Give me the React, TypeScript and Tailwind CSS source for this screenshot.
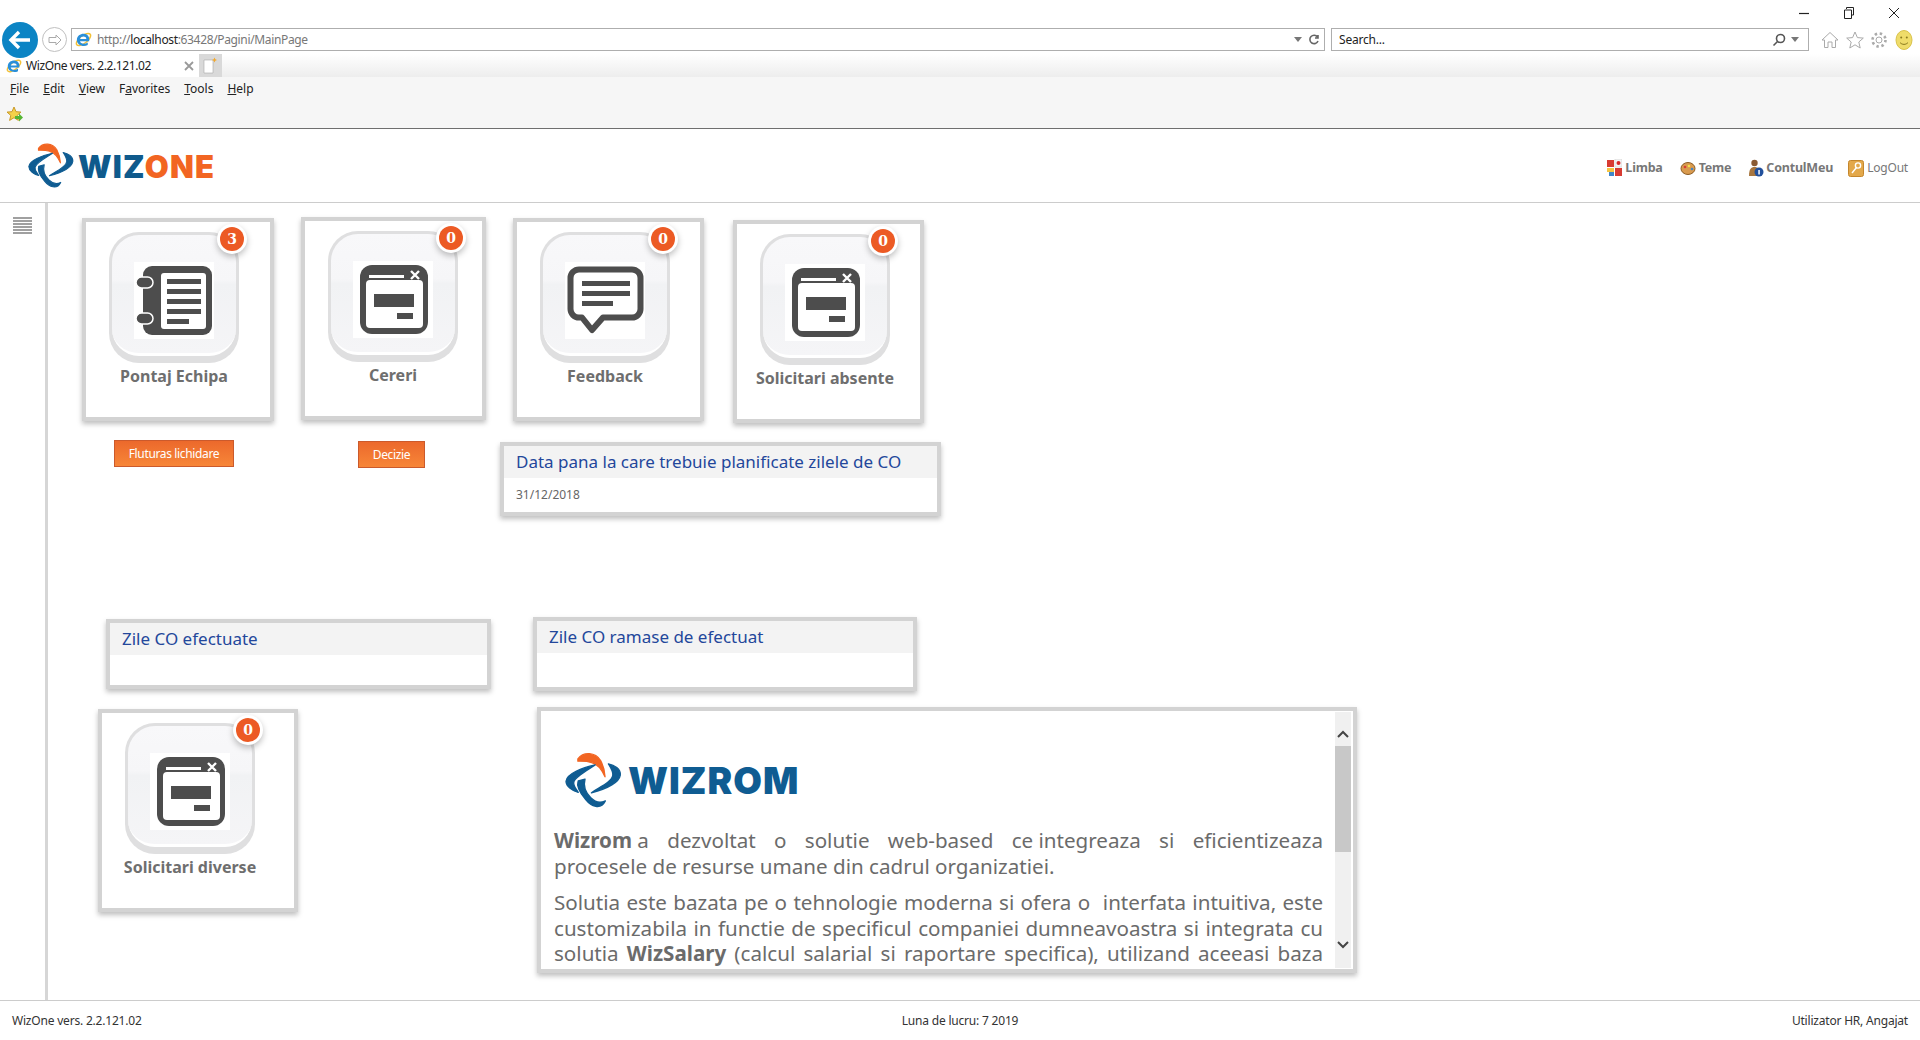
import React from 'react';

const pageFont = { fontFamily: '"Noto Sans", sans-serif' };

const LogoMark: React.FC<{ size: number; className?: string }> = ({ size, className }) => (
  <svg width={size} height={size} viewBox="-3 -3 171 171" strokeWidth="4" strokeLinejoin="round" className={className}>
    <path d="M35 20C52-2 86 0 102 25C110 40 114 56 115 73C106 52 95 36 76 31C60 26 46 27 35 27Z" fill="#f26522" stroke="#f26522" />
    <path d="M125 35C142 38 162 50 160 68C157 88 125 108 75 120C100 103 136 88 138 68C139 56 131 45 125 35Z" fill="#0f5c92" stroke="#0f5c92" />
    <path d="M36 85C30 102 42 122 58 140C74 160 102 172 116 144C100 152 86 148 73 135C58 120 50 102 56 80Z" fill="#0f5c92" stroke="#0f5c92" />
    <path d="M86 38C48 46 2 64 0 86C0 102 20 115 36 119C30 108 20 100 23 88C27 72 62 54 86 38Z" fill="#0f5c92" stroke="#0f5c92" />
  </svg>
);

const IeIcon: React.FC<{ size?: number }> = ({ size = 18 }) => (
  <svg width={size} height={size} viewBox="0 0 18 18" fill="none">
    <ellipse cx="9" cy="9" rx="9" ry="4" transform="rotate(-38 9 9)" stroke="#f2c037" strokeWidth="1.6" />
    <path d="M15 10.8H5.3C5.6 13.4 10 14.5 13.5 12.2V14.8C8.8 17.2 2 15 2 9.4C2 3.6 9 1.4 12.8 4C14.8 5.5 15.4 8 15 10.8ZM12 8.4C12 5 5.8 5 5.4 8.4Z" fill="#2a8fd8" />
  </svg>
);

const NotebookIcon = () => (
  <svg width="80" height="77" viewBox="0 0 80 77">
    <rect x="9" y="4" width="69" height="69" rx="9" fill="#4d4d4d" />
    <rect x="27" y="11" width="45" height="56" rx="3" fill="#fff" />
    <rect x="33" y="17" width="34" height="5" fill="#4d4d4d" />
    <rect x="33" y="27" width="34" height="5" fill="#4d4d4d" />
    <rect x="33" y="37" width="34" height="5" fill="#4d4d4d" />
    <rect x="33" y="47" width="34" height="5" fill="#4d4d4d" />
    <rect x="33" y="57" width="22" height="5" fill="#4d4d4d" />
    <rect x="2" y="15" width="17" height="11" rx="5.5" fill="#4d4d4d" stroke="#fff" strokeWidth="1.5" />
    <rect x="2" y="51" width="17" height="11" rx="5.5" fill="#4d4d4d" stroke="#fff" strokeWidth="1.5" />
  </svg>
);

const WindowIcon = () => (
  <svg width="80" height="77" viewBox="0 0 80 77">
    <rect x="7" y="4" width="68" height="69" rx="12" fill="#4d4d4d" />
    <rect x="13" y="19" width="57" height="48" rx="4" fill="#fff" />
    <rect x="16" y="14" width="35" height="3" fill="#fff" />
    <path d="M58 10L66 18M66 10L58 18" stroke="#fff" strokeWidth="2.4" />
    <rect x="21" y="33" width="40" height="13" fill="#4d4d4d" />
    <rect x="44" y="52" width="16" height="6" fill="#4d4d4d" />
  </svg>
);

const ChatIcon = () => (
  <svg width="80" height="77" viewBox="0 0 80 77" fill="none">
    <path
      d="M14 7.5H67A8.5 8.5 0 0 1 75.5 16V47A8.5 8.5 0 0 1 67 55.5H38L27 68L17 55.5H14A8.5 8.5 0 0 1 5.5 47V16A8.5 8.5 0 0 1 14 7.5Z"
      stroke="#4d4d4d"
      strokeWidth="6"
      strokeLinejoin="round"
    />
    <rect x="17" y="19" width="48" height="5" fill="#4d4d4d" />
    <rect x="17" y="29" width="48" height="5" fill="#4d4d4d" />
    <rect x="17" y="39" width="31" height="5" fill="#4d4d4d" />
  </svg>
);

const Badge: React.FC<{ count: number }> = ({ count }) => (
  <div className="absolute -right-[8px] -top-[8px] flex h-[30px] w-[30px] items-center justify-center rounded-full bg-white shadow-[0_3px_6px_rgba(0,0,0,0.25)]">
    <div
      className="flex h-[24px] w-[24px] items-center justify-center rounded-full bg-[#ec5a24] text-[14px] font-bold text-white"
      style={{ fontFamily: '"DejaVu Serif", serif' }}
    >
      {count}
    </div>
  </div>
);

type TileCardProps = {
  title: string;
  count: number;
  icon: React.ReactNode;
  className: string;
};

const TileCard: React.FC<TileCardProps> = ({ title, count, icon, className }) => (
  <div className={`h-[203px] shrink-0 border-4 border-[#d3d3d3] bg-white pl-[23px] pt-[10px] shadow-[0_3px_5px_rgba(0,0,0,0.25)] ${className}`}>
    <div className="flex w-[130px] flex-col items-center">
      <div className="relative h-[131px] w-[130px] rounded-[30px] bg-[#dfdfe0] px-[3px] pb-[7px] pt-[3px]">
        <div className="flex h-full items-center justify-center rounded-[27px] border-b-[3px] border-white bg-[linear-gradient(#f8f8fa_0%,#f6f6f8_38%,#f1f2f4_42%,#f5f5f7_100%)] pt-[13px]">
          <div className="bg-white">{icon}</div>
        </div>
        <Badge count={count} />
      </div>
      <div className="mt-px whitespace-nowrap text-[16px] font-bold text-[#6e6e6e]" style={pageFont}>
        {title}
      </div>
    </div>
  </div>
);

const ActionButton: React.FC<{ label: string; className: string }> = ({ label, className }) => (
  <button
    className={`block h-[27px] border border-[#cb5a2c] bg-[linear-gradient(#ec692c,#f78638)] text-[12px] tracking-[-0.35px] text-white ${className}`}
    style={pageFont}
  >
    {label}
  </button>
);

const InfoPanel: React.FC<{ title: string; children?: React.ReactNode; className: string }> = ({ title, children, className }) => (
  <div className={`shrink-0 border-4 border-[#d3d3d3] bg-white shadow-[0_3px_5px_rgba(0,0,0,0.25)] ${className}`} style={pageFont}>
    <div className="flex h-[32px] items-center bg-[#f3f3f3] pl-[12px] text-[17px] text-[#23479b]">{title}</div>
    {children}
  </div>
);

const MiniIcon: React.FC<{ children: React.ReactNode }> = ({ children }) => (
  <svg width="16" height="18" viewBox="0 0 16 18" className="shrink-0">
    {children}
  </svg>
);

function MiniIconSlot({ className, children }: { className: string; children: React.ReactNode }) {
  return (
    <span className={`flex ${className}`}>
      <MiniIcon>{children}</MiniIcon>
    </span>
  );
}

const MENU = ['File', 'Edit', 'View', 'Favorites', 'Tools', 'Help'];

const BrowserChrome = () => (
  <div className="h-[129px] shrink-0 border-b border-[#6f6f6f] bg-white" style={pageFont}>
    {/* Window buttons */}
    <div className="flex h-[28px] items-center justify-end gap-[31px] pb-[3px] pr-[19px]">
      <svg width="14" height="14" viewBox="0 0 14 14"><path d="M2 7.5H12" stroke="#222" strokeWidth="1.2" /></svg>
      <svg width="14" height="14" viewBox="0 0 14 14" fill="none" stroke="#222"><path d="M4.5 3V1.5H11.5V9H9.5M2.5 4H9.5V12.5H2.5Z" /></svg>
      <svg width="14" height="14" viewBox="0 0 14 14" stroke="#222"><path d="M2 2L12 12M12 2L2 12" /></svg>
    </div>

    {/* Address row */}
    <div className="relative z-10 flex h-[23px] items-center pr-[10px]">
      <div className="ml-[2px] flex h-[36px] w-[36px] shrink-0 items-center justify-center rounded-full bg-[#0b84c4]">
        <svg width="24" height="22" viewBox="0 0 24 22" fill="none" stroke="#fff" strokeWidth="3.4"><path d="M11 3L3 11L11 19M3 11H22" /></svg>
      </div>
      <div className="ml-[4px] flex h-[25px] w-[25px] shrink-0 items-center justify-center rounded-full border border-[#c0c0c0]">
        <svg width="14" height="14" viewBox="0 0 14 14" fill="none" stroke="#aaa"><path d="M8 2L13 7L8 12V9.5H1V4.5H8Z" /></svg>
      </div>
      <div className="ml-[4px] flex h-[23px] w-[1254px] shrink-0 items-center border border-[#aeaeae] pl-[3px] text-[12px] tracking-[-0.35px] text-[#777]">
        <IeIcon size={17} />
        <span className="ml-[5px]">http://<span className="text-[#222]">localhost</span>:63428/Pagini/MainPage</span>
        <svg width="8" height="5" viewBox="0 0 8 5" className="ml-auto"><path d="M0 0H8L4 5Z" fill="#777" /></svg>
        <svg width="12" height="12" viewBox="0 0 12 12" fill="none" stroke="#666" strokeWidth="1.6" className="ml-[6px] mr-[4px]"><path d="M9.5 3A4.2 4.2 0 1 0 10 7M10 1V4H7" /></svg>
      </div>
      <div className="ml-[6px] flex h-[23px] w-[478px] shrink-0 items-center border border-[#aeaeae] pl-[7px] text-[12px] tracking-[-0.2px] text-[#222]">
        Search...
        <svg width="14" height="14" viewBox="0 0 14 14" fill="none" stroke="#555" strokeWidth="1.6" className="ml-auto"><circle cx="8.5" cy="5.5" r="4" /><path d="M5.5 8.5L1.5 12.5" /></svg>
        <svg width="8" height="5" viewBox="0 0 8 5" className="ml-[5px] mr-[9px]"><path d="M0 0H8L4 5Z" fill="#777" /></svg>
      </div>
      <div className="ml-[12px] flex items-center gap-[6.5px]">
        <svg width="18" height="18" viewBox="0 0 18 18" fill="none" stroke="#aaa"><path d="M1 9L9 1.5L17 9H14.5V16.5H11V11H7V16.5H3.5V9Z" /></svg>
        <svg width="18" height="18" viewBox="0 0 18 18" fill="none" stroke="#aaa"><path d="M9 1L11.4 6.6L17.3 7.1L12.8 11L14.2 17L9 13.8L3.8 17L5.2 11L.7 7.1L6.6 6.6Z" /></svg>
        <svg width="18" height="18" viewBox="0 0 18 18" fill="none" stroke="#aaa"><circle cx="9" cy="9" r="3" /><circle cx="9" cy="9" r="6.5" strokeWidth="2.6" strokeDasharray="2.4 2.7" /></svg>
        <svg width="18" height="20" viewBox="0 0 18 20"><ellipse cx="9" cy="10" rx="8" ry="9.5" fill="#efdc6a" stroke="#d9c24a" /><circle cx="6.2" cy="7.5" r="1" fill="#8a7a1e" /><circle cx="11.8" cy="7.5" r="1" fill="#8a7a1e" /><path d="M5 12.5C7 15 11 15 13 12.5" fill="none" stroke="#8a7a1e" /></svg>
      </div>
    </div>

    {/* Tabs */}
    <div className="mt-[3px] flex h-[23px] bg-[linear-gradient(#ffffff,#ededed)] pr-[14px]">
      <div className="flex w-[199px] shrink-0 items-center bg-white pl-[6px] pt-px text-[12px] tracking-[-0.4px] text-[#222]">
        <IeIcon size={16} />
        <span className="ml-[4px]">WizOne vers. 2.2.121.02</span>
        <svg width="10" height="10" viewBox="0 0 10 10" stroke="#999" strokeWidth="1.8" className="ml-auto mr-[5px]"><path d="M1 1L9 9M9 1L1 9" /></svg>
      </div>
      <div className="flex w-[23px] shrink-0 items-center justify-center bg-[#d9d9d9]">
        <svg width="15" height="17" viewBox="0 0 15 17"><path d="M1 3H10V16H1Z" fill="#fff" stroke="#aaa" strokeWidth="0.6" /><path d="M11.5 0.5L12.3 2.2L14 3L12.3 3.8L11.5 5.5L10.7 3.8L9 3L10.7 2.2Z" fill="#f2a82c" /></svg>
      </div>
    </div>

    {/* Menu and favourites */}
    <div className="h-[51px] bg-[#f6f6f6] text-[12px] text-[#222]">
      <div className="flex h-[24px] items-center gap-[14px] pl-[10px]">
        {MENU.map(item => {
          const underlineAt = item === 'Favorites' ? 1 : 0;
          return (
            <span key={item}>
              {item.slice(0, underlineAt)}
              <span className="underline">{item[underlineAt]}</span>
              {item.slice(underlineAt + 1)}
            </span>
          );
        })}
      </div>
      <div className="pl-[6px] pt-[5px]">
        <svg width="17" height="17" viewBox="0 0 17 17">
          <path d="M8 1L10 5.7L15 6.1L11.2 9.4L12.4 14.4L8 11.7L3.6 14.4L4.8 9.4L1 6.1L6 5.7Z" fill="#f5d24a" stroke="#c9992a" />
          <path d="M9 10H13V7.5L17 11.5L13 15.5V13H9Z" fill="#55b533" />
        </svg>
      </div>
    </div>
  </div>
);

const AppHeader = () => (
  <header className="flex h-[74px] shrink-0 items-center border-b border-[#cccccc] bg-white pl-[28px] pr-[12px]" style={pageFont}>
    <LogoMark size={47} />
    <span className="ml-[3px] mt-[2px] text-[31px] font-black leading-none tracking-[1.2px]" style={{ fontFamily: 'Inter, sans-serif' }}>
      <span className="text-[#0f5a8c]">WIZ</span>
      <span className="text-[#f26522]">ONE</span>
    </span>
    <div className="ml-auto flex items-center pt-[5px] text-[12.5px] font-bold tracking-[-0.2px] text-[#777]">
      <MiniIcon>
        <rect x="1" y="1" width="7" height="7" fill="#d83b32" />
        <rect x="9" y="0" width="7" height="8" fill="#f4f4f4" stroke="#ddd" />
        <circle cx="12.5" cy="4" r="2" fill="#d8282a" />
        <rect x="1" y="9" width="7" height="4" fill="#f5c542" />
        <rect x="3" y="13" width="5" height="4" fill="#3f86c9" />
        <rect x="9" y="9" width="7" height="8" fill="#d83b32" />
      </MiniIcon>
      <span className="ml-[3px]">Limba</span>
      <MiniIconSlot className="ml-[17px]">
        <ellipse cx="8" cy="9.5" rx="7" ry="6" fill="#d99a4e" stroke="#8a5a22" />
        <circle cx="5" cy="8" r="1.3" fill="#d83b32" />
        <circle cx="9" cy="7" r="1.3" fill="#f4e04a" />
        <circle cx="12" cy="10" r="1.3" fill="#3f86c9" />
      </MiniIconSlot>
      <span className="ml-[3px]">Teme</span>
      <MiniIconSlot className="ml-[17px]">
        <circle cx="6.5" cy="4" r="3.2" fill="#8a5a32" />
        <path d="M1 17C1 10 3 8 6.5 8S12 10 12 17Z" fill="#a8763e" />
        <circle cx="11" cy="13" r="4.5" fill="#21509c" />
        <rect x="10.3" y="11" width="1.5" height="4.5" fill="#fff" />
      </MiniIconSlot>
      <span className="ml-[2px]">ContulMeu</span>
      <MiniIconSlot className="ml-[15px]">
        <rect x="0.5" y="1.5" width="15" height="16" rx="2" fill="#e3a84a" stroke="#c4862c" />
        <circle cx="10" cy="6.5" r="2.6" fill="none" stroke="#fff" strokeWidth="1.4" />
        <path d="M8.5 8.5L4 14" stroke="#fff" strokeWidth="1.4" />
      </MiniIconSlot>
      <span className="ml-[3px] text-[12px] font-normal">LogOut</span>
    </div>
  </header>
);

const WizromPanel = () => (
  <div className="ml-[4px] mt-[16px] flex h-[266px] w-[820px] border-4 border-[#d3d3d3] bg-white p-px shadow-[0_3px_5px_rgba(0,0,0,0.25)]">
    <div className="h-[256px] flex-1 overflow-hidden pl-[12px] pr-[12px] text-[20.6px] leading-[25.5px] text-[#6b6b6b]" style={pageFont}>
      <div className="flex h-[116px] items-end pb-[19px] pl-[11px]">
        <LogoMark size={58} />
        <span className="ml-[5px] pb-[10px] text-[37px] font-black leading-none tracking-[1px] text-[#0f5c92]" style={{ fontFamily: 'Inter, sans-serif' }}>WIZROM</span>
      </div>
      <p className="text-justify">
        <span className="inline-block"><b>Wizrom</b> a</span> dezvoltat o solutie web-based <span className="inline-block">ce integreaza</span> si eficientizeaza procesele de resurse umane din cadrul organizatiei.
      </p>
      <p className="mt-[11px] text-justify">
        Solutia este bazata pe o tehnologie moderna si ofera o&nbsp; interfata intuitiva, este customizabila in functie de specificul companiei dumneavoastra si integrata cu solutia <b>WizSalary</b> (calcul salarial si raportare specifica), utilizand aceeasi baza de date.
      </p>
    </div>
    {/* Scrollbar */}
    <div className="mr-px flex w-[16px] shrink-0 flex-col items-center bg-[#f0f0f0]">
      <div className="flex h-[34px] w-full items-center justify-center pt-[9px]">
        <svg width="12" height="8" viewBox="0 0 12 8" fill="none" stroke="#444" strokeWidth="2"><path d="M1 7L6 2L11 7" /></svg>
      </div>
      <div className="h-[106px] w-full bg-[#c8c8c8]" />
      <div className="mt-auto flex h-[34px] w-full items-center justify-center pb-[12px]">
        <svg width="12" height="8" viewBox="0 0 12 8" fill="none" stroke="#444" strokeWidth="2"><path d="M1 1L6 6L11 1" /></svg>
      </div>
    </div>
  </div>
);

const Dashboard = () => (
  <main className="min-w-0 flex-1 overflow-hidden bg-white">
    {/* First row of widgets */}
    <div className="flex items-start">
      <div className="ml-[34px] mt-[15px] w-[192px] shrink-0">
        <TileCard title="Pontaj Echipa" count={3} icon={<NotebookIcon />} className="w-[192px]" />
        <ActionButton label="Fluturas lichidare" className="ml-[32px] mt-[19px] w-[120px]" />
      </div>
      <div className="ml-[27px] mt-[14px] w-[185px] shrink-0">
        <TileCard title="Cereri" count={0} icon={<WindowIcon />} className="w-[185px]" />
        <ActionButton label="Decizie" className="ml-[57px] mt-[21px] w-[67px]" />
      </div>
      <div className="ml-[14px] mt-[15px] shrink-0">
        <div className="flex items-start">
          <TileCard title="Feedback" count={0} icon={<ChatIcon />} className="ml-[13px] w-[191px]" />
          <TileCard title="Solicitari absente" count={0} icon={<WindowIcon />} className="ml-[29px] mt-[2px] w-[191px]" />
        </div>
        <InfoPanel title="Data pana la care trebuie planificate zilele de CO" className="mt-[19px] h-[74px] w-[441px]">
          <div className="pl-[12px] pt-[8px] text-[12px] text-[#666]">31/12/2018</div>
        </InfoPanel>
      </div>
    </div>

    {/* Second row of widgets */}
    <div className="ml-[50px] mt-[101px] flex items-start">
      <div className="w-[393px] shrink-0 pt-[2px]">
        <InfoPanel title="Zile CO efectuate" className="ml-[8px] h-[70px] w-[385px]" />
        <TileCard title="Solicitari diverse" count={0} icon={<WindowIcon />} className="mt-[20px] w-[200px]" />
      </div>
      <div className="ml-[42px] shrink-0">
        <InfoPanel title="Zile CO ramase de efectuat" className="h-[74px] w-[384px]" />
        <WizromPanel />
      </div>
    </div>
  </main>
);

const App: React.FC = () => {
  return (
    <div className="flex h-[1040px] w-[1920px] flex-col overflow-hidden bg-white">
      <BrowserChrome />
      <AppHeader />
      <div className="flex h-[797px] shrink-0">
        {/* Sidebar */}
        <aside className="w-[48px] shrink-0 border-r-[3px] border-[#d6d6d6] pl-[13px] pt-[14px]">
          <div className="flex w-[19px] flex-col gap-px">
            {[0, 1, 2, 3, 4, 5].map(i => (
              <span key={i} className="h-[2px] bg-[#a0a0a0]" />
            ))}
          </div>
        </aside>
        <Dashboard />
      </div>
      <footer className="grid h-[40px] shrink-0 grid-cols-3 items-center border-t border-[#cccccc] px-[12px] text-[12px] tracking-[-0.2px] text-[#333]" style={pageFont}>
        <span>WizOne vers. 2.2.121.02</span>
        <span className="text-center">Luna de lucru: 7 2019</span>
        <span className="text-right">Utilizator HR, Angajat</span>
      </footer>
    </div>
  );
};

export default App;
